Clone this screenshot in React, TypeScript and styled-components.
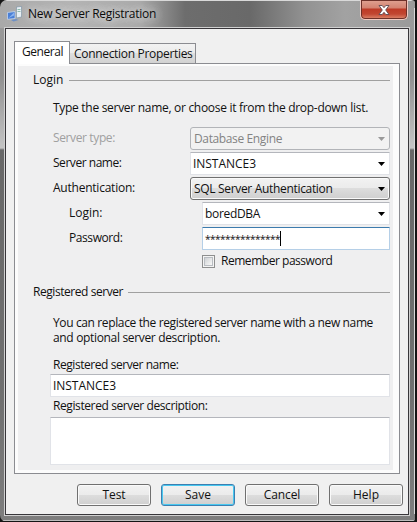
import React, { useLayoutEffect, useRef, useState } from 'react';
import styled, { createGlobalStyle, css } from 'styled-components';

const Global = createGlobalStyle`
  *{box-sizing:border-box}
  html,body{margin:0;padding:0;background:#161616;overflow:hidden}
  body{font-family:"Open Sans","Noto Sans",sans-serif;font-size:12px;color:#111;line-height:16px}
`;

const Window = styled.div`
  width:417px;height:522px;padding:0 8px 7px 5px;
  background:
    linear-gradient(#d8d8d8,#d8d8d8) 414px 8px/1px 506px no-repeat,
    linear-gradient(#141414,#141414) 415px 0/2px 522px no-repeat,
    linear-gradient(#d0d0d0,#d0d0d0) 4px 27px/406px 489px no-repeat,
    linear-gradient(#151515,#151515) 0 521px/417px 1px no-repeat,
    linear-gradient(#bdbdbd,#bdbdbd) 0 520px/417px 1px no-repeat,
    linear-gradient(#d9d9d9,#d9d9d9) 0 0/417px 1px no-repeat,
    linear-gradient(90deg,#a9a9a9 0,#b4b4b4 70px,#aaa 140px,#6d6d6d 185px,#696969 250px,#929292 305px,#a2a2a2 345px,#9a9a9a 417px) 0 0/417px 28px no-repeat,
    linear-gradient(#999 28px,#8f8f8f 75px,#c4c4c4 148px,#686868 150px,#707070 400px,#7e7e7e 522px);
  border-radius:7px 6px 7px 7px;
  overflow:hidden;
`;

const TitleBar = styled.header`
  height:28px;display:flex;align-items:flex-start;padding-left:2px;
`;
const Title = styled.span`
  margin:6px 0 0 5px;white-space:nowrap;color:#0b0b0b;text-shadow:0 0 8px #ddd,0 0 8px #ddd;
`;
const Close = styled.button`
  margin:0 1px 0 auto;padding:0;width:48px;height:20px;
  border:1px solid #f0c8c0;border-top:0;border-radius:0 0 5px 5px;
  box-shadow:inset 0 0 0 1px #6d3129;
  background:linear-gradient(#e0a292 0,#d38270 8px,#bd3a26 9px,#c14631 14px,#e08a70 19px);
  display:flex;align-items:center;justify-content:center;
`;
const IconSlot = styled.span`display:flex;margin-top:6px;`;

const Client = styled.main`
  width:404px;height:487px;border:1px solid #38363a;background:#f0f0f0;
  padding:12px 0 0 8px;
`;
const Tabs = styled.nav`display:flex;align-items:flex-end;height:22px;`;
const Tab = styled.div<{ $active?: boolean }>`
  border:1px solid #8b8c91;border-bottom:0;display:flex;white-space:nowrap;
  ${p => p.$active
    ? css`width:56px;height:23px;margin-bottom:-1px;background:#fff;padding:2px 0 0 7px;z-index:1;`
    : css`width:126px;height:20px;border-left:0;background:linear-gradient(#f2f2f2,#ebebeb 50%,#dedede 50%,#d2d2d2);padding:2px 0 0 4px;`}
`;
const Page = styled.section`
  width:386px;height:411px;border:1px solid #8b8c91;
  background:linear-gradient(#efeff0,#efeff0) 3px 2px/375px 404px no-repeat,#fcfcfc;
  padding:8px 9px 0 18px;
`;

const TextSpan = styled.span`white-space:nowrap;`;

/* A caption whose tracking is adjusted so that it occupies `w` pixels. */
const Text = ({ w, children }: { w: number; children: string }) => {
  const ref = useRef<HTMLSpanElement>(null);
  const [spacing, setSpacing] = useState(0);
  useLayoutEffect(() => {
    if (!ref.current) return;
    const range = document.createRange();
    range.selectNodeContents(ref.current);
    setSpacing((w - range.getBoundingClientRect().width) / children.length);
  }, []);
  return <TextSpan ref={ref} style={{ letterSpacing: spacing }}>{children}</TextSpan>;
};

const Heading = styled.div<{ $top?: number; $gap: number }>`
  display:flex;align-items:center;height:16px;gap:${p => p.$gap}px;margin-top:${p => p.$top ?? 0}px;
  &::after{content:"";flex:1;height:1px;background:#a0a0a0;}
`;
const Note = styled.div<{ $top: number; $h: number }>`
  margin-top:${p => p.$top}px;height:${p => p.$h}px;padding-left:20px;
  display:flex;flex-direction:column;line-height:15px;
`;
const Row = styled.div<{ $indent?: boolean }>`
  height:23px;margin-bottom:2px;display:grid;
  grid-template-columns:${p => (p.$indent ? '133px 188px' : '137px 200px')};
  padding-left:${p => (p.$indent ? 36 : 20)}px;align-items:center;
  ${p => !p.$indent && 'margin-right:-1px;'}
`;
const RowLabel = styled.span<{ $muted?: boolean }>`
  margin-top:-1px;${p => p.$muted && 'color:#a0a0a0;'}
`;

const looks = {
  edit: css`background:#fff;border:1px solid #e1e3e8;border-top-color:#b4b6bc;`,
  button: css`background:linear-gradient(#f2f2f2,#ebebeb 50%,#dddddd 50%,#cfcfcf);border:1px solid #707070;border-radius:3px;box-shadow:inset 0 0 0 1px #fafafa;`,
  disabled: css`background:#f2f2f2;border:1px solid #b2b4b8;border-radius:3px;color:#838383;`,
  focus: css`background:#fff;border:1px solid #b5cfe7;border-top-color:#3d7bad;border-radius:1px;`,
};
const Field = styled.div<{ $look: keyof typeof looks }>`
  height:23px;display:flex;align-items:center;justify-content:space-between;padding:0 4px 0 2px;
  ${p => looks[p.$look]}
  ${p => (p.$look === 'button' || p.$look === 'disabled') && 'padding-left:3px;'}
`;
const Caret = styled.i`width:1px;height:15px;background:#000;`;
const Typed = styled.span`display:flex;align-items:center;font-size:10px;`;
const Check = styled.label`
  display:flex;align-items:center;gap:6px;height:16px;margin:3px 0 0 169px;
`;
const Box = styled.i`
  width:13px;height:13px;border:1px solid #8e8f8f;background:linear-gradient(135deg,#c3c7cb,#f5f5f5 75%);
  box-shadow:inset 0 0 0 1px #f4f4f4,inset 0 0 0 2px #b9bdc2;
`;
const FieldBlock = styled.div<{ $top: number; $gap: number; $h: number }>`
  margin:${p => p.$top}px 0 0 17px;display:flex;flex-direction:column;gap:${p => p.$gap}px;
  & > ${TextSpan}{padding-left:3px;height:16px;}
  & > ${Field}{height:${p => p.$h}px;}
`;
const Footer = styled.footer`
  display:flex;gap:10px;padding:10px 0 0 63px;
`;
const Push = styled.button<{ $primary?: boolean }>`
  width:74px;height:22px;padding:0;font:inherit;line-height:18px;color:#111;text-align:center;
  ${looks.button}
  ${p => p.$primary && css`border-color:#3c7fb1;box-shadow:inset 0 0 0 1px #48c8f0;`}
`;

const Arrow = ({ muted }: { muted?: boolean }) => (
  <svg width="7" height="4" viewBox="0 0 7 4"><path d="M0 0h7L3.5 4z" fill={muted ? '#999' : '#000'} /></svg>
);

const ServerIcon = () => (
  <svg width="16" height="16" viewBox="0 0 16 16">
    <path d="M9.5 1l5-.6V11l-5 1z" fill="#e7eff5" stroke="#8397a8" strokeWidth=".7" />
    <path d="M10.5 3.5h3M10.5 5.5h3" stroke="#8fbcae" />
    <path d="M.5 6.5L8 5.5v7l-7.5.8z" fill="#4a7fd6" stroke="#c4d5ef" strokeWidth=".8" />
    <path d="M1.5 12L7 6.5v3z" fill="#8cb4f0" />
    <path d="M4 14l5-1 2.5 1-5 1.5z" fill="#6d8fc4" />
  </svg>
);

export default function App() {
  return (
    <>
      <Global />
      <Window>
        <TitleBar>
          <IconSlot><ServerIcon /></IconSlot>
          <Title><Text w={128}>New Server Registration</Text></Title>
          <Close aria-label="Close">
            <svg width="12" height="10" viewBox="0 0 12 10">
              <path d="M1 .5h3.2L6 2.7 7.8.5H11L7.7 5 11 9.5H7.8L6 7.3 4.2 9.5H1L4.3 5z" fill="#fff" stroke="#5c4a52" strokeWidth=".9" />
            </svg>
          </Close>
        </TitleBar>
        <Client>
          <Tabs>
            <Tab $active><Text w={41}>General</Text></Tab>
            <Tab><Text w={118.5}>Connection Properties</Text></Tab>
          </Tabs>
          <Page>
            <Heading $gap={5}><Text w={30.5}>Login</Text></Heading>
            <Note $top={12} $h={27}><Text w={315}>Type the server name, or choose it from the drop-down list.</Text></Note>
            <Row><RowLabel $muted><Text w={62}>Server type:</Text></RowLabel><Field $look="disabled"><Text w={88}>Database Engine</Text><Arrow muted /></Field></Row>
            <Row><RowLabel><Text w={68.5}>Server name:</Text></RowLabel><Field $look="edit"><Text w={63}>INSTANCE3</Text><Arrow /></Field></Row>
            <Row><RowLabel><Text w={82}>Authentication:</Text></RowLabel><Field $look="button"><Text w={138.5}>SQL Server Authentication</Text><Arrow /></Field></Row>
            <Row $indent><RowLabel><Text w={33.5}>Login:</Text></RowLabel><Field $look="edit"><Text w={55}>boredDBA</Text><Arrow /></Field></Row>
            <Row $indent><RowLabel><Text w={53.5}>Password:</Text></RowLabel><Field $look="focus"><Typed><Text w={75}>***************</Text><Caret /></Typed></Field></Row>
            <Check><Box /><Text w={111.5}>Remember password</Text></Check>
            <Heading $gap={5} $top={15}><Text w={90}>Registered server</Text></Heading>
            <Note $top={15} $h={42}>
              <Text w={320}>You can replace the registered server name with a new name</Text>
              <Text w={167}>and optional server description.</Text>
            </Note>
            <FieldBlock $top={0} $gap={1} $h={23}><Text w={125.5}>Registered server name:</Text><Field $look="edit"><Text w={63}>INSTANCE3</Text></Field></FieldBlock>
            <FieldBlock $top={1} $gap={3} $h={48}><Text w={154.5}>Registered server description:</Text><Field $look="edit" /></FieldBlock>
          </Page>
          <Footer>
            <Push><Text w={23}>Test</Text></Push>
            <Push $primary><Text w={26}>Save</Text></Push>
            <Push><Text w={36.5}>Cancel</Text></Push>
            <Push><Text w={26}>Help</Text></Push>
          </Footer>
        </Client>
      </Window>
    </>
  );
}
